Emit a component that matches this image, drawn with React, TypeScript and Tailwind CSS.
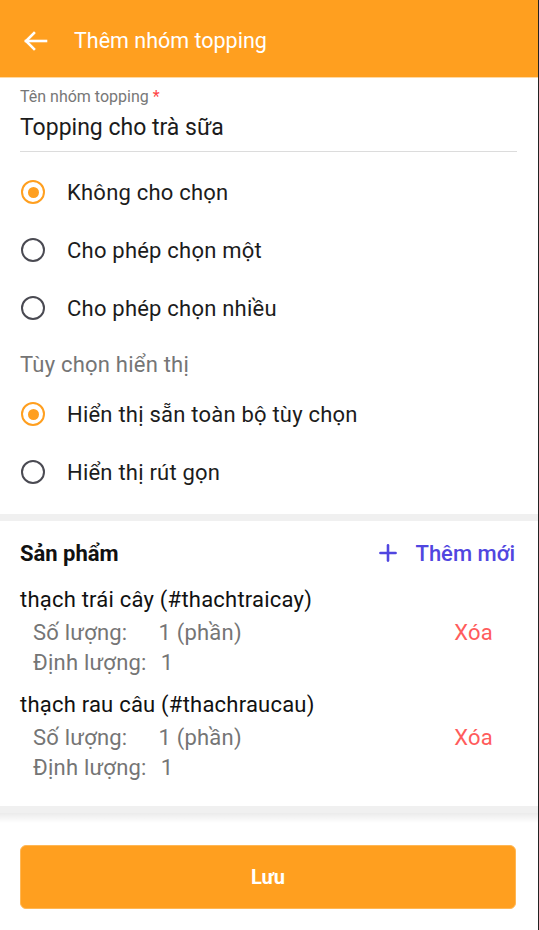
import React from 'react';
import { Plus } from 'lucide-react';

type Product = { name: string; code: string; qty: string; amount: string };

const products: Product[] = [
    { name: 'thạch trái cây', code: 'thachtraicay', qty: '1 (phần)', amount: '1' },
    { name: 'thạch rau câu', code: 'thachraucau', qty: '1 (phần)', amount: '1' },
];

function Radio({ label, checked }: { label: string; checked?: boolean }) {
    return (
        <div className="flex h-[58px] items-center px-[21px]">
            <span
                className={
                    checked
                        ? 'flex h-[24px] w-[24px] items-center justify-center rounded-full border-[2.5px] border-[#ff9f1f]'
                        : 'flex h-[24px] w-[24px] items-center justify-center rounded-full border-[2.5px] border-[#4a4a52]'
                }
            >
                {checked && <span className="h-[11px] w-[11px] rounded-full bg-[#ff9f1f]" />}
            </span>
            <span className="ml-[22px] text-[22px] tracking-[0.01em] text-[#1c1c1c]">{label}</span>
        </div>
    );
}

export default function App() {
    return (
        <div className="flex h-[930px] w-[539px] flex-col border-r border-[#222] bg-white font-['Roboto',sans-serif]">
            {/* header */}
            <div className="flex h-[78px] shrink-0 items-center border-b border-[#ffd9a3] bg-[#ff9f1f] pt-[5px] pl-[24px]">
                <svg width="24" height="20" viewBox="0 0 24 20" fill="none" stroke="white" strokeWidth="2.6" strokeLinecap="square">
                    <path d="M2 10H22" />
                    <path d="M10 2L2 10L10 18" />
                </svg>
                <h1 className="ml-[26px] text-[21.5px] text-white">Thêm nhóm topping</h1>
            </div>

            {/* form */}
            <div className="shrink-0 pb-[13px]">
                <div className="pt-[10px] pr-[21px] pl-5">
                    <div className="h-[18px] text-[16px] leading-[18px] text-[#777]">
                        Tên nhóm topping <span className="text-[#f44]">*</span>
                    </div>
                    <div className="h-[46px] border-b border-[#dcdcdc] text-[23px] leading-[44px] text-[#1c1c1c]">
                        Topping cho trà sữa
                    </div>
                </div>

                <div className="mt-[11px]">
                    <Radio label="Không cho chọn" checked />
                    <Radio label="Cho phép chọn một" />
                    <Radio label="Cho phép chọn nhiều" />
                </div>

                <div className="flex h-[48px] items-center px-5 pt-[6px] text-[22px] tracking-[0.01em] text-[#757575]">
                    Tùy chọn hiển thị
                </div>
                <Radio label="Hiển thị sẵn toàn bộ tùy chọn" checked />
                <Radio label="Hiển thị rút gọn" />
            </div>

            <div className="h-[7px] shrink-0 bg-[#f0f0f0]" />

            {/* products */}
            <div className="shrink-0 px-5 pt-[12px] pb-[24px]">
                <div className="flex h-[40px] items-center justify-between">
                    <span className="text-[22px] font-bold text-[#111]">Sản phẩm</span>
                    <button className="mr-[3px] flex items-center text-[22px] font-medium text-[#5046e0]">
                        <Plus size={26} strokeWidth={2.4} />
                        <span className="ml-[14px]">Thêm mới</span>
                    </button>
                </div>

                {products.map((p, i) => (
                    <div key={p.code} className={i === 0 ? 'mt-[11px]' : 'mt-[12px]'}>
                        <div className="h-[32px] text-[22px] leading-[32px] tracking-[0.01em] text-[#111]">
                            {p.name} (#{p.code})
                        </div>
                        <div className="flex h-[32px] items-center pl-[13px] pr-[25px] text-[22px] tracking-[0.01em] text-[#757575]">
                            <span>Số lượng:</span>
                            <span className="ml-[31px]">{p.qty}</span>
                            <span className="ml-auto text-[#ff5c5c]">Xóa</span>
                        </div>
                        <div className="flex h-[29px] items-center pl-[13px] text-[22px] tracking-[0.01em] text-[#757575]">
                            <span>Định lượng:</span>
                            <span className="ml-[14px]">{p.amount}</span>
                        </div>
                    </div>
                ))}
            </div>

            <div className="h-[7px] shrink-0 bg-[#f0f0f0]" />

            {/* footer */}
            <div className="flex flex-1 flex-col bg-white">
                <div className="h-[10px] bg-linear-to-b from-[#ebebeb] to-white" />
                <div className="pt-[22px] pr-[22px] pl-5">
                    <button className="flex h-[64px] w-full items-center justify-center rounded-[6px] border border-[#ffb755] bg-[#ff9f1f] text-[20px] font-bold text-white">
                        Lưu
                    </button>
                </div>
            </div>
        </div>
    );
}
